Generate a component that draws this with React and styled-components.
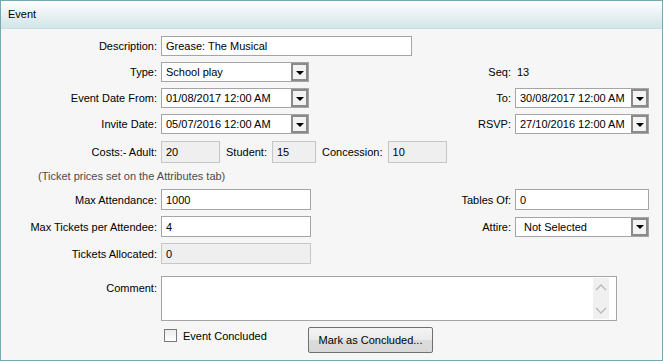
import React from 'react';
import styled, { createGlobalStyle } from 'styled-components';

const Global = createGlobalStyle`
  html, body { margin: 0; padding: 0; background: #ffffff; }
  body {
    font-family: "Liberation Sans", Arial, sans-serif;
    font-size: 11px;
    color: #000;
  }
  * { box-sizing: border-box; }
`;

const Frame = styled.div`
  width: 663px;
  height: 361px;
  border: 1px solid #74a9b0;
  background: #f6f6f6;
  display: flex;
  flex-direction: column;
`;

const Header = styled.div`
  height: 28px;
  flex: none;
  padding: 0 7px 2px;
  display: flex;
  align-items: center;
  background: linear-gradient(#fdfefe, #d2e5e8);
  border-bottom: 1px solid #c8dee1;
  font-size: 11px;
`;

const Form = styled.div`
  display: grid;
  grid-template-columns: 156px 150px 196px 134px;
  column-gap: 4px;
  row-gap: 6px;
  padding-top: 7px;
  align-items: center;
`;

const Label = styled.div`
  grid-column: 1;
  text-align: right;
  white-space: nowrap;
  align-self: ${(p) => (p.$top ? 'start' : 'center')};
  padding-top: ${(p) => (p.$top ? '12px' : '0')};
`;

const RightLabel = styled.div`
  grid-column: 3;
  text-align: right;
  white-space: nowrap;
`;

const Value = styled.div`
  padding-left: 2px;
`;

const TextInput = styled.input`
  grid-column: ${(p) => p.$col || 'auto'};
  width: ${(p) => p.$w}px;
  height: ${(p) => p.$h || 20}px;
  border: 1px solid ${(p) => (p.readOnly ? '#c6c6c6' : '#a5a5a5')};
  background: ${(p) => (p.readOnly ? '#efefef' : '#ffffff')};
  padding: 0 4px;
  font-family: inherit;
  font-size: 11px;
  color: #000;
  outline: none;
  margin: 0;
`;

const SelectBox = styled.div`
  width: ${(p) => p.$w}px;
  height: ${(p) => p.$h || 20}px;
  border: 1px solid #a5a5a5;
  background: #fff;
  display: flex;
  align-items: stretch;
`;

const SelectText = styled.div`
  flex: 1;
  display: flex;
  align-items: center;
  padding-left: ${(p) => p.$pad || 4}px;
  white-space: nowrap;
  overflow: hidden;
`;

const DropButton = styled.div`
  width: 17px;
  flex: none;
  border: 2px solid #8a8a8a;
  background: #f3f3f3;
  display: flex;
  align-items: center;
  justify-content: center;
`;

const Arrow = styled.div`
  width: 0;
  height: 0;
  border-left: 4px solid transparent;
  border-right: 4px solid transparent;
  border-top: 4px solid #000;
  margin-top: 1px;
`;

const Costs = styled.div`
  grid-column: 2 / -1;
  display: flex;
  align-items: center;
  margin-top: 1px;
`;

const InlineLabel = styled.span`
  margin: 0 5px 0 6px;
  white-space: nowrap;
`;

const Note = styled.div`
  grid-column: 1 / -1;
  padding-left: 37px;
  color: #4c4c4c;
  line-height: 14px;
`;

const CommentBox = styled.div`
  grid-column: 2 / -1;
  width: 456px;
  height: 45px;
  margin-top: 6px;
  border: 1px solid #a5a5a5;
  background: #fff;
  display: flex;
  justify-content: flex-end;
  padding: 1px 7px 1px 0;
`;

const ScrollTrack = styled.div`
  width: 16px;
  background: #f0f0f0;
  display: flex;
  flex-direction: column;
  align-items: center;
  justify-content: space-between;
  padding: 5px 0 4px;
`;

const BottomRow = styled.div`
  grid-column: 2 / -1;
  display: flex;
  align-items: flex-start;
  height: 27px;
`;

const CheckWrap = styled.label`
  width: 147px;
  flex: none;
  display: flex;
  align-items: center;
  gap: 6px;
  padding: 2px 0 0 3px;
`;

const CheckBox = styled.span`
  width: 13px;
  height: 13px;
  border: 1px solid #7a7a7a;
  background: linear-gradient(#ececec, #ffffff);
`;

const Button = styled.button`
  width: 125px;
  height: 26px;
  border: 1px solid #707070;
  border-radius: 2px;
  background: linear-gradient(#f4f4f4 0%, #eaeaea 50%, #dcdcdc 51%, #d8d8d8 100%);
  font-family: inherit;
  font-size: 11px;
  color: #000;
  padding: 0;
  margin: 0;
`;

const Chevron = ({ up }) => (
  <svg width="12" height="8" viewBox="0 0 12 8">
    <path
      d={up ? 'M1 7 L6 2 L11 7' : 'M1 1 L6 6 L11 1'}
      fill="none"
      stroke="#b8b8b8"
      strokeWidth="1.3"
    />
  </svg>
);

const Select = ({ value, w, h, pad }) => (
  <SelectBox $w={w} $h={h}>
    <SelectText $pad={pad}>{value}</SelectText>
    <DropButton>
      <Arrow />
    </DropButton>
  </SelectBox>
);

export default function App() {
  return (
    <>
      <Global />
      <Frame>
        <Header>Event</Header>
        <Form>
          <Label>Description:</Label>
          <TextInput $col="2 / span 2" $w={251} $h={20} defaultValue="Grease: The Musical" />

          <Label>Type:</Label>
          <Select value="School play" w={148} />
          <RightLabel>Seq:</RightLabel>
          <Value>13</Value>

          <Label>Event Date From:</Label>
          <Select value="01/08/2017 12:00 AM" w={148} />
          <RightLabel>To:</RightLabel>
          <Select value="30/08/2017 12:00 AM" w={134} />

          <Label>Invite Date:</Label>
          <Select value="05/07/2016 12:00 AM" w={148} />
          <RightLabel>RSVP:</RightLabel>
          <Select value="27/10/2016 12:00 AM" w={134} />

          <Label>Costs:- Adult:</Label>
          <Costs>
            <TextInput readOnly $w={59} $h={22} defaultValue="20" />
            <InlineLabel>Student:</InlineLabel>
            <TextInput readOnly $w={44} $h={22} defaultValue="15" />
            <InlineLabel>Concession:</InlineLabel>
            <TextInput readOnly $w={59} $h={22} defaultValue="10" />
          </Costs>

          <Note>(Ticket prices set on the Attributes tab)</Note>

          <Label>Max Attendance:</Label>
          <TextInput $w={150} $h={21} defaultValue="1000" />
          <RightLabel>Tables Of:</RightLabel>
          <TextInput $w={134} $h={21} defaultValue="0" />

          <Label>Max Tickets per Attendee:</Label>
          <TextInput $w={150} $h={21} defaultValue="4" />
          <RightLabel>Attire:</RightLabel>
          <Select value="Not Selected" w={134} h={20} pad={8} />

          <Label>Tickets Allocated:</Label>
          <TextInput readOnly $w={150} $h={21} defaultValue="0" />

          <Label $top>Comment:</Label>
          <CommentBox>
            <ScrollTrack>
              <Chevron up />
              <Chevron />
            </ScrollTrack>
          </CommentBox>

          <BottomRow>
            <CheckWrap>
              <CheckBox />
              Event Concluded
            </CheckWrap>
            <Button>Mark as Concluded...</Button>
          </BottomRow>
        </Form>
      </Frame>
    </>
  );
}
